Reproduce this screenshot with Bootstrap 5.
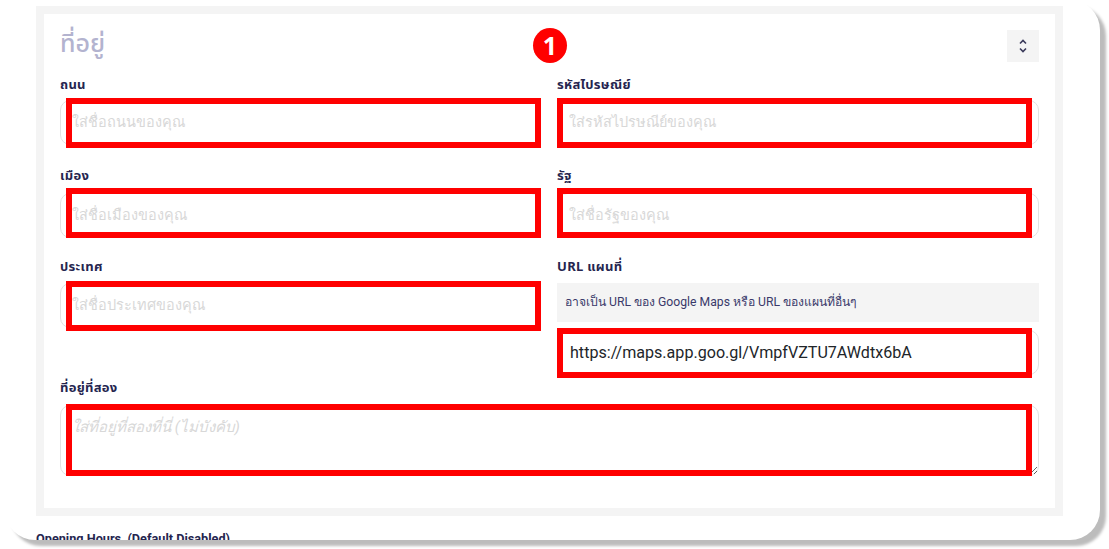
<!doctype html>
<html lang="th">
<head>
<meta charset="utf-8">
<title>ที่อยู่</title>
<link href="https://cdn.jsdelivr.net/npm/bootstrap@5.3.0/dist/css/bootstrap.min.css" rel="stylesheet">
<style>
html,body{height:549px;overflow:hidden;background:#fff}
body{font-family:"Noto Sans","Noto Sans Thai",Roboto,"Liberation Sans",sans-serif;color:#25254f}
.shot-frame{margin-left:5px;width:1095px;height:540px;background:#fff;border-radius:30px;box-shadow:6px 6px 3px #bcbcbc;overflow:hidden;padding:6px 37px 0 31px}
.addr-panel{border:8px solid #f4f4f4;height:510px;padding:16px 16px 0 16px;position:relative}
.head-row{height:46px}
.addr-title{font-size:25px;font-weight:500;line-height:25px;color:#b3b3cf;margin:0}
.toggle-box{width:32px;height:32px;background:#f4f4f4;border:0;padding:0}
.step-dot{position:absolute;left:489px;top:14px;width:34px;height:35px;border-radius:50%;background:#f00;color:#fff;font:700 25px/35px "Open Sans",sans-serif;text-align:center}
.field-label{display:block;font-size:13px;letter-spacing:.3px;font-weight:700;line-height:16px;color:#25254f;margin:0 0 8px}
.gap-8{margin-bottom:10px}
.gap-7{margin-bottom:9px}
.addr-input{height:45px;border:1px solid #e2e2e2;border-radius:10px;padding:0 11px;font:14.500px Roboto,"Noto Sans",sans-serif;color:#212529;box-shadow:none}
.addr-input::placeholder{color:#d8d8d8;opacity:1}
.url-input{font-size:16.100px;padding-left:12px}
.addr-area{height:71px;padding-top:9px;font-size:15px}
.addr-area::placeholder{font-style:italic}
.field-wrap{position:relative}
.red-mark{position:absolute;border:6px solid #f00;pointer-events:none}
.mark-left{left:6px;right:0;top:-2px;bottom:-3px}
.mark-left-b{left:6px;right:0;top:-5px;bottom:0}
.mark-right{left:0;right:7px;top:-2px;bottom:-3px}
.mark-right-b{left:0;right:7px;top:-5px;bottom:0}
.mark-wide{left:6px;right:7px;top:-1px;bottom:0}
.hint-box{background:#f4f4f4;height:39px;font:12.200px/39px Roboto,"Noto Sans",sans-serif;padding-left:8px;color:#3a3a6a;margin-bottom:8px}
.addr-grid{display:grid;grid-template-columns:481px 482px;column-gap:16px}
.cell-a{height:91px}
.cell-c{height:121px}
.next-head{font:700 12.700px/18px Roboto,sans-serif;color:#25254f;margin-top:14px}
</style>
</head>
<body>
<div class="shot-frame">
  <div class="addr-panel">
    <div class="d-flex justify-content-between head-row">
      <h2 class="addr-title">ที่อยู่</h2>
      <button class="toggle-box d-flex align-items-center justify-content-center" type="button" aria-label="ยุบ">
        <svg width="8" height="14" viewBox="0 0 8 14" fill="none" stroke="#3a3a5a" stroke-width="1.6"><path d="M1 4.500 4 1.500l3 3M1 9.500l3 3 3-3"/></svg>
      </button>
    </div>
    <span class="step-dot">1</span>
    <div class="addr-grid">
      <div class="cell-a"><label class="field-label">ถนน</label><div class="field-wrap"><input class="form-control addr-input" placeholder="ใส่ชื่อถนนของคุณ"><span class="red-mark mark-left"></span></div></div>
      <div class="cell-a"><label class="field-label">รหัสไปรษณีย์</label><div class="field-wrap"><input class="form-control addr-input" placeholder="ใส่รหัสไปรษณีย์ของคุณ"><span class="red-mark mark-right"></span></div></div>
      <div class="cell-a"><label class="field-label gap-8">เมือง</label><div class="field-wrap"><input class="form-control addr-input" placeholder="ใส่ชื่อเมืองของคุณ"><span class="red-mark mark-left-b"></span></div></div>
      <div class="cell-a"><label class="field-label gap-8">รัฐ</label><div class="field-wrap"><input class="form-control addr-input" placeholder="ใส่ชื่อรัฐของคุณ"><span class="red-mark mark-right-b"></span></div></div>
      <div class="cell-c"><label class="field-label gap-7">ประเทศ</label><div class="field-wrap"><input class="form-control addr-input" placeholder="ใส่ชื่อประเทศของคุณ"><span class="red-mark mark-left"></span></div></div>
      <div class="cell-c"><label class="field-label gap-7">URL แผนที่</label><div class="hint-box">อาจเป็น URL ของ Google Maps หรือ URL ของแผนที่อื่นๆ</div><div class="field-wrap"><input class="form-control addr-input url-input" value="https://maps.app.goo.gl/VmpfVZTU7AWdtx6bA"><span class="red-mark mark-right"></span></div></div>
    </div>
    <label class="field-label gap-8">ที่อยู่ที่สอง</label>
    <div class="field-wrap"><textarea class="form-control addr-input addr-area" placeholder="ใส่ที่อยู่ที่สองที่นี่ (ไม่บังคับ)"></textarea><span class="red-mark mark-wide"></span></div>
  </div>
  <div class="next-head">Opening Hours &nbsp;(Default Disabled)</div>
</div>
<script src="https://cdn.jsdelivr.net/npm/bootstrap@5.3.0/dist/js/bootstrap.bundle.min.js"></script>
</body>
</html>
